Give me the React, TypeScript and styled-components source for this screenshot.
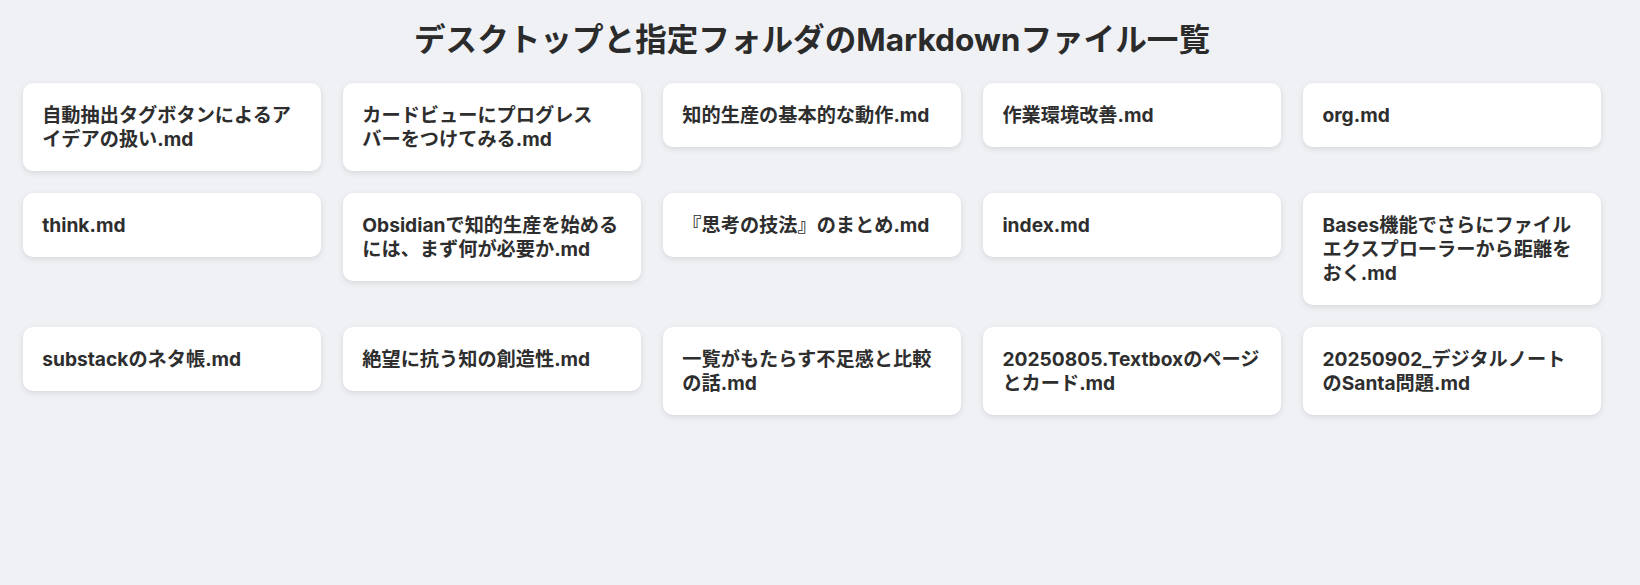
import React from 'react';
import styled, {createGlobalStyle} from "styled-components";

const files = [
  '自動抽出タグボタンによるアイデアの扱い.md',
  'カードビューにプログレスバーをつけてみる.md',
  '知的生産の基本的な動作.md',
  '作業環境改善.md',
  'org.md',
  'think.md',
  'Obsidianで知的生産を始めるには、まず何が必要か.md',
  '『思考の技法』のまとめ.md',
  'index.md',
  'Bases機能でさらにファイルエクスプローラーから距離をおく.md',
  'substackのネタ帳.md',
  '絶望に抗う知の創造性.md',
  '一覧がもたらす不足感と比較の話.md',
  '20250805.Textboxのページとカード.md',
  '20250902_デジタルノートのSanta問題.md',
];

function App() {
  return (
      <>
        <GlobalStyle/>
        <Page lang="ja">
          <Title>デスクトップと指定フォルダのMarkdownファイル一覧</Title>
          <Grid>
            {files.map(name => (
                <Card key={name}>{name}</Card>
            ))}
          </Grid>
        </Page>
      </>
  );
}

const GlobalStyle = createGlobalStyle`
  body {
    margin: 0;
    background: #eff1f5;
    font-family: Inter, "Noto Sans CJK JP", sans-serif;
    color: #2e2e2e;
  }
`;

const Page = styled.div`
  padding: 20px 39px 20px 23px;
`;

const Title = styled.h1`
  margin: 0 0 23px;
  text-align: center;
  font-size: 31.6px;
  line-height: 40px;
  font-weight: 700;
  color: #2b2b2b;
`;

const Grid = styled.div`
  display: grid;
  grid-template-columns: repeat(5, 1fr);
  gap: 22px 22.4px;
  align-items: start;
`;

const Card = styled.div`
  background: #fff;
  border-radius: 10px;
  padding: 20px 19.2px;
  font-size: 19.2px;
  line-height: 24px;
  font-weight: 700;
  color: #2e2e2e;
  line-break: strict;
  box-shadow: 0 2px 6px rgba(0, 0, 0, 0.1);
`;

export default App;
